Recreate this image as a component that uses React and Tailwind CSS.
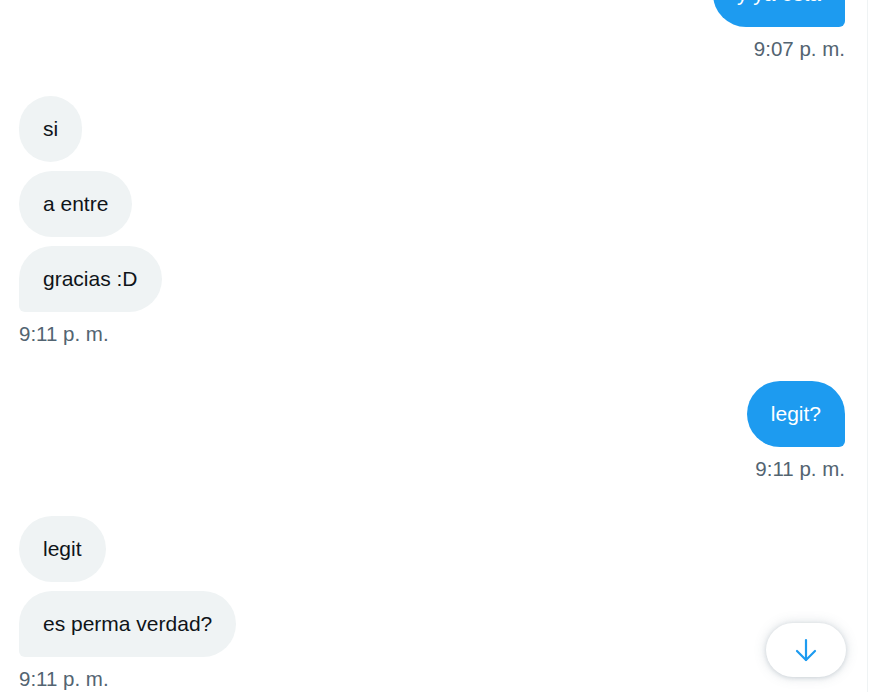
const messages = [
  { side: 'out', texts: ['y ya esta'], time: '9:07 p. m.' },
  { side: 'in', texts: ['si', 'a entre', 'gracias :D'], time: '9:11 p. m.' },
  { side: 'out', texts: ['legit?'], time: '9:11 p. m.' },
  { side: 'in', texts: ['legit', 'es perma verdad?'], time: '9:11 p. m.' },
];

const Bubble = ({ text, side, last }) => {
  const base = 'px-[24px] py-[18px] text-[21px] leading-[30px] rounded-[33px] whitespace-nowrap';
  if (side === 'out') {
    return (
      <div className={`${base} bg-[#1d9bf0] text-white ${last ? 'rounded-br-[6px]' : ''}`}>
        {text}
      </div>
    );
  }
  return (
    <div className={`${base} bg-[#eff3f4] text-[#0f1419] ${last ? 'rounded-bl-[6px]' : ''}`}>
      {text}
    </div>
  );
};

const ArrowDown = () => (
  <svg width="24" height="24" viewBox="0 0 24 24" fill="none" stroke="#1d9bf0" strokeWidth="2.2" strokeLinecap="round" strokeLinejoin="round">
    <path d="M12 2v20" />
    <path d="M3 13l9 9 9-9" />
  </svg>
);

const App = () => {
  return (
    <div className="h-screen w-full bg-white overflow-hidden" style={{ fontFamily: '"Liberation Sans", Arial, sans-serif' }}>
      <div className="relative h-full w-[868px] border-r border-[#eff3f4] overflow-hidden">
        <div className="-mt-[39px] pl-[19px] pr-[22px] flex flex-col gap-[35px]">
          {messages.map((group, i) => (
            <div
              key={i}
              className={`flex flex-col ${group.side === 'out' ? 'items-end' : 'items-start'}`}
            >
              <div className={`flex flex-col gap-[9px] ${group.side === 'out' ? 'items-end' : 'items-start'}`}>
                {group.texts.map((t, j) => (
                  <Bubble key={j} text={t} side={group.side} last={j === group.texts.length - 1} />
                ))}
              </div>
              <div className="mt-[10px] text-[20.5px] leading-[24px] text-[#536471]">{group.time}</div>
            </div>
          ))}
        </div>

        {/* scroll to bottom */}
        <button className="absolute left-[766px] top-[623px] w-[80px] h-[54px] rounded-full bg-white flex items-center justify-center shadow-[0_0_12px_rgba(101,119,134,0.25),0_1px_4px_rgba(101,119,134,0.2)]">
          <ArrowDown />
        </button>
      </div>
    </div>
  );
};

export default App;
